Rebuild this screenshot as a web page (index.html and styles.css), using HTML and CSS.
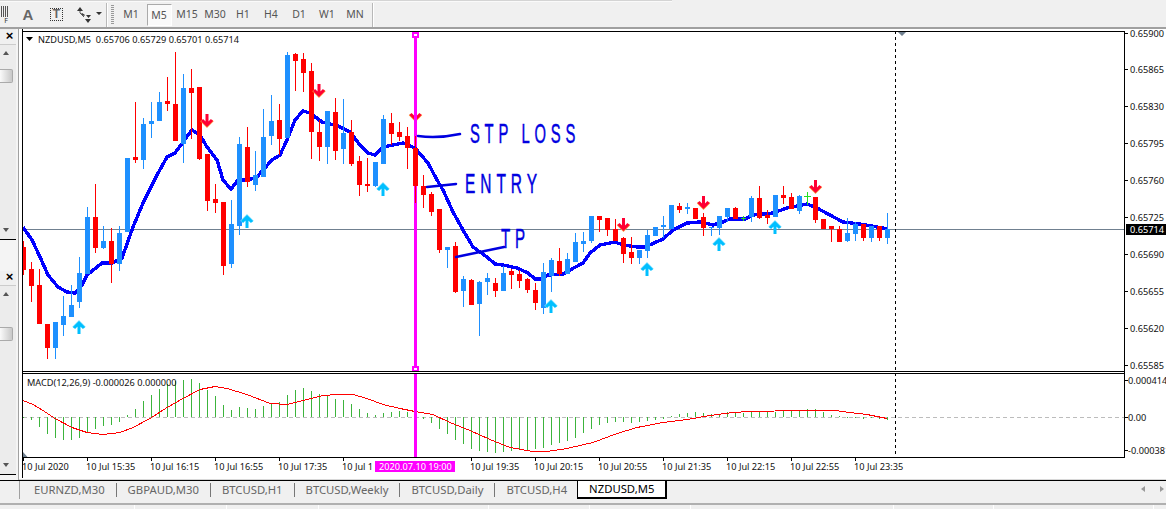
FILE: index.html
```html
<!DOCTYPE html>
<html lang="en">
<head>
<meta charset="utf-8">
<title>NZDUSD,M5</title>
<link rel="stylesheet" href="styles.css">
</head>
<body>
<header class="toolbar">
  <div class="topline"></div>
  <div class="tools">
    <div class="tool-f"><span class="tool-f-grid"></span><span class="tool-f-letter">F</span></div>
    <span class="tool-a">A</span>
    <span class="tool-t">T</span>
    <svg class="tool-arrows" width="27" height="16" viewBox="0 0 27 16">
      <path class="ico-fill" d="M1 4 4 0 7 4ZM9 12h6l-3 4ZM6 6l3 2-1 1-3-2ZM10 8h5l-2.500 3h0ZM20 5h6l-3 3Z"/>
      <path class="ico-line" d="M4 4v2l4 4"/>
    </svg>
    <span class="sep sep-a"></span>
    <span class="grip"></span>
    <nav class="periods">
      <span class="period">M1</span>
      <span class="period active">M5</span>
      <span class="period">M15</span>
      <span class="period">M30</span>
      <span class="period">H1</span>
      <span class="period">H4</span>
      <span class="period">D1</span>
      <span class="period">W1</span>
      <span class="period">MN</span>
    </nav>
    <span class="sep"></span>
  </div>
</header>

<main class="workspace">
  <aside class="side">
    <section class="side-panel first">
      <div class="side-head"><span class="close">×</span></div>
      <div class="scroll">
        <span class="tri-up"></span>
        <span class="thumb"></span>
        <span class="tri-down"></span>
      </div>
    </section>
    <section class="side-panel second">
      <div class="side-head"><span class="close">×</span></div>
      <div class="scroll">
        <span class="tri-up"></span>
        <span class="thumb"></span>
        <span class="tri-down"></span>
      </div>
    </section>
  </aside>

  <div class="chart-wrap">
    <svg class="chart" width="1147" height="449" viewBox="19 29 1147 449">
      <defs>
        <g id="dn">
          <path class="a-edge" d="M-6 6.500 0 12.500 6 6.500"/>
          <path class="a-red" d="M0 0V10M-5 6 0 11 5 6"/>
        </g>
        <g id="up">
          <path class="a-cyan-l" d="M-6 6.500 0 .5 6 6.500"/>
          <path class="a-cyan" d="M0 13V2M-5 7 0 2 5 7"/>
        </g>
        <clipPath id="main-clip"><rect x="23" y="32" width="1101" height="339"/></clipPath>
      </defs>

      <path class="cross" d="M23 229.500H1125"/>
      <g clip-path="url(#main-clip)">
        <use href="#dn" x="415.500" y="108"/>
        <rect class="vline" x="414" y="31" width="3" height="340"/>
        <path class="ma" d="M23 227 32 240 40 257 48 275 58 287 67 292 75 293 82 285 87 275 102 263 112 263 122 258 133 227 143 203 157 175 167 157 175 153 183 142 192 130 200 135 207 147 217 160 223 180 231 189 238 180 248 180 257 177 263 170 272 160 280 155 287 140 295 120 303 111 310 113 322 122 338 126 350 132 360 145 368 153 375 155 382 148 388 146 403 143 415 148 428 163 437 180 443 190 453 212 463 230 473 247 487 257 495 264 503 265 517 268 528 273 535 279 540 279 548 275 563 274 570 270 583 263 590 253 600 245 615 242 623 245 637 247 645 247 663 239 673 230 687 223 700 222 713 225 723 222 730 219 745 219 753 215 773 213 787 208 807 204 817 208 830 215 843 222 860 224 877 227 888 229"/>
        <path class="wick red" d="M23.500 241V275M31.500 262V302M39.500 269V324M47.500 348V359M95.500 184V253M111.500 228V283M135.500 102V163M167.500 77V111M175.500 52V141M191.500 69V139M199.500 87V160M207.500 154V211M215.500 184V213M223.500 202V275M247.500 127V187M279.500 104V155M295.500 53V91M303.500 53V92M311.500 63V159M319.500 120V161M335.500 98V160M351.500 120V166M359.500 156V196M367.500 158V192M391.500 113V145M399.500 122V141M407.500 127V169M415.500 136V203M423.500 175V208M431.500 192V216M439.500 209V253M455.500 242V293M471.500 279V305M495.500 278V297M511.500 269V289M519.500 270V288M527.500 278V293M535.500 283V310M559.500 248V276M599.500 216V232M607.500 218V236M615.500 219V241M623.500 237V263M631.500 237V264M679.500 203V213M695.500 208V219M703.500 213V236M735.500 207V219M759.500 186V219M767.500 210V224M783.500 186V204M791.500 193V209M815.500 197V223M823.500 219V229M831.500 226V242M839.500 226V242M863.500 224V241M879.500 226V241"/>
        <path class="body red" d="M23.500 247V270M31.500 269V286M39.500 285V324M47.500 324V348M95.500 217V248M111.500 241V264M135.500 157V160M167.500 101V104M175.500 104V141M191.500 88V93M199.500 87V159M207.500 154V201M215.500 199V203M223.500 202V266M247.500 147V182M279.500 120V139M295.500 54V61M303.500 59V73M311.500 71V132M319.500 132V147M335.500 112V151M351.500 132V164M359.500 161V185M367.500 184V186M391.500 123V134M399.500 132V137M407.500 136V148M415.500 148V186M423.500 186V195M431.500 194V212M439.500 209V250M455.500 246V292M471.500 280V305M495.500 283V291M511.500 271V275M519.500 274V281M527.500 279V290M535.500 290V303M559.500 261V274M599.500 216V220M607.500 218V230M615.500 229V241M623.500 238V254M631.500 252V258M679.500 206V210M695.500 208V219M703.500 217V228M735.500 208V219M759.500 198V218M767.500 215V218M783.500 195V198M791.500 197V209M815.500 197V220M823.500 219V229M831.500 226V229M839.500 229V242M863.500 224V238M879.500 226V238"/>
        <path class="wick blue" d="M55.500 322V359M63.500 296V336M71.500 285V317M79.500 257V308M87.500 207V274M103.500 226V249M119.500 226V271M127.500 158V232M143.500 118V169M151.500 102V138M159.500 92V121M183.500 74V163M231.500 200V268M239.500 137V235M255.500 151V191M263.500 109V177M271.500 95V145M287.500 52V138M327.500 111V164M343.500 99V164M375.500 162V187M383.500 115V164M447.500 247V268M463.500 276V307M479.500 281V336M487.500 273V295M503.500 266V291M543.500 263V314M551.500 258V292M567.500 253V274M575.500 233V262M583.500 232V252M591.500 216V243M639.500 250V264M647.500 230V258M655.500 227V236M663.500 216V238M671.500 205V229M687.500 203V214M711.500 227V236M719.500 216V235M727.500 208V222M751.500 196V222M775.500 195V217M799.500 195V214M847.500 218V242M855.500 222V241M871.500 226V242M887.500 213V244"/>
        <path class="body blue" d="M55.500 322V348M63.500 316V325M71.500 305V317M79.500 273V302M87.500 217V274M103.500 241V248M119.500 233V264M127.500 158V232M143.500 124V160M151.500 121V124M159.500 102V121M183.500 88V144M231.500 224V264M239.500 144V226M255.500 175V185M263.500 137V177M271.500 121V136M287.500 55V138M327.500 111V147M343.500 133V149M375.500 162V186M383.500 119V164M447.500 247V250M463.500 279V291M479.500 282V304M487.500 278V282M503.500 273V291M543.500 272V308M551.500 260V276M567.500 259V274M575.500 242V262M583.500 241V244M591.500 216V241M639.500 250V258M647.500 235V251M655.500 227V236M663.500 225V227M671.500 205V229M687.500 207V209M711.500 227V228M719.500 216V228M727.500 208V217M751.500 198V217M775.500 195V217M799.500 196V211M847.500 233V241M855.500 224V234M871.500 226V238M887.500 229V238"/>
        <path class="doji" d="M743.500 216V221M741 218.500H746M807.500 192V205M804 196.500H811"/>
        <use href="#dn" x="207" y="114"/>
        <use href="#dn" x="319" y="84"/>
        <use href="#dn" x="623.500" y="218"/>
        <use href="#dn" x="703.500" y="196"/>
        <use href="#dn" x="815.500" y="180"/>
        <use href="#up" x="79" y="321"/>
        <use href="#up" x="247" y="215"/>
        <use href="#up" x="383" y="183"/>
        <use href="#up" x="551" y="300"/>
        <use href="#up" x="647" y="263"/>
        <use href="#up" x="719" y="238"/>
        <use href="#up" x="775" y="221"/>
      </g>
      <rect class="handle" x="412.500" y="32.500" width="5" height="4"/>
      <rect class="handle" x="412.500" y="366.500" width="5" height="4"/>

      <path class="note-line" d="M418 136C432 138 446 137 460 134M427 187 456 184M456 257 504 247"/>
      <text class="note" x="470" y="143" textLength="110" lengthAdjust="spacingAndGlyphs">STP LOSS</text>
      <text class="note" x="465" y="193" textLength="77" lengthAdjust="spacingAndGlyphs">ENTRY</text>
      <text class="note" x="501" y="248" textLength="29" lengthAdjust="spacingAndGlyphs">TP</text>

      <path class="zero" d="M23 417.500H1124"/>
      <path class="hist" d="M23.500 417V418M31.500 417V420M39.500 417V427M47.500 417V434M55.500 417V438M63.500 417V440M71.500 417V440M79.500 417V438M87.500 417V432M95.500 417V429M103.500 417V426M111.500 417V425M119.500 417V422M127.500 417V415M135.500 417V409M143.500 417V401M151.500 417V395M159.500 417V389M167.500 417V384M175.500 417V381M183.500 417V380M191.500 417V379M199.500 417V383M207.500 417V390M215.500 417V396M223.500 417V405M231.500 417V410M239.500 417V407M247.500 417V408M255.500 417V409M263.500 417V406M271.500 417V404M279.500 417V402M287.500 417V395M295.500 417V390M303.500 417V388M311.500 417V391M319.500 417V394M327.500 417V396M335.500 417V399M343.500 417V400M351.500 417V404M359.500 417V409M367.500 417V413M375.500 417V415M383.500 417V413M391.500 417V412M399.500 417V411M407.500 417V412M423.500 417V419M431.500 417V423M439.500 417V429M447.500 417V434M455.500 417V440M463.500 417V444M471.500 417V449M479.500 417V451M487.500 417V452M495.500 417V453M503.500 417V452M511.500 417V451M519.500 417V450M527.500 417V450M535.500 417V449M543.500 417V448M551.500 417V445M559.500 417V443M567.500 417V441M575.500 417V438M583.500 417V433M591.500 417V429M599.500 417V425M607.500 417V423M615.500 417V422M623.500 417V422M631.500 417V423M639.500 417V422M647.500 417V421M655.500 417V420M663.500 417V419M671.500 417V416M679.500 417V414M687.500 417V413M695.500 417V412M703.500 417V413M711.500 417V414M719.500 417V414M727.500 417V412M735.500 417V413M743.500 417V413M751.500 417V412M759.500 417V412M767.500 417V412M775.500 417V412M783.500 417V410M791.500 417V410M799.500 417V410M807.500 417V409M815.500 417V409M823.500 417V412M831.500 417V415M839.500 417V416M847.500 417V418M855.500 417V418M863.500 417V419M871.500 417V418M879.500 417V419M887.500 417V420"/>
      <path class="signal" d="M23 400.500 33 404.500 43 410.500 55 418.500 72 427.500 87 432.500 103 434.500 120 432.500 133 427.500 150 418.500 167 407.500 183 398.500 200 389.500 215 386.500 227 388.500 247 394.500 270 403.500 287 404.500 303 400.500 323 395.500 337 394.500 353 394.500 367 398.500 383 404.500 400 408.500 415 411.500 433 414.500 450 422.500 470 430.500 490 439.500 510 447.500 533 451.500 547 451.500 567 448.500 593 442.500 617 433.500 637 427.500 663 422.500 687 419.500 710 415.500 733 412.500 750 411.500 800 410.500 835 410.500 850 412.500 867 414.500 887 418.500"/>
      <rect class="vline" x="414" y="374" width="3" height="83"/>

      <path class="dash" d="M895.500 31V457"/>
      <path class="corner" d="M897 31H907L902 36ZM23 452 27.500 457H23Z"/>
      <path class="frame" d="M22.500 29V478M22.500 31.500H1124.500V371.500H22.500M22.500 373.500H1124.500V457.500H22.500M1124.500 31V458"/>
      <path class="frame" d="M1125 33.500h3M1125 69.500h3M1125 106.500h3M1125 143.500h3M1125 180.500h3M1125 217.500h3M1125 254.500h3M1125 291.500h3M1125 328.500h3M1125 365.500h3M1125 380.500h3M1125 417.500h3M1125 450.500h3M23.500 458v3M87.500 458v3M151.500 458v3M215.500 458v3M279.500 458v3M343.500 458v3M471.500 458v3M535.500 458v3M599.500 458v3M663.500 458v3M727.500 458v3M791.500 458v3M855.500 458v3"/>
      <path class="legend-tri" d="M26 37H33L29.500 41Z"/>

      <text class="lbl" x="38" y="43">NZDUSD,M5  0.65706 0.65729 0.65701 0.65714</text>
      <text class="lbl" x="27" y="386">MACD(12,26,9) -0.000026 0.000000</text>

      <text class="lbl" x="1130" y="37">0.65900</text>
      <text class="lbl" x="1130" y="73">0.65865</text>
      <text class="lbl" x="1130" y="110">0.65830</text>
      <text class="lbl" x="1130" y="147">0.65795</text>
      <text class="lbl" x="1130" y="184">0.65760</text>
      <text class="lbl" x="1130" y="221">0.65725</text>
      <text class="lbl" x="1130" y="258">0.65690</text>
      <text class="lbl" x="1130" y="295">0.65655</text>
      <text class="lbl" x="1130" y="332">0.65620</text>
      <text class="lbl" x="1130" y="369">0.65585</text>
      <rect class="price-box" x="1126" y="224" width="40" height="11"/>
      <text class="lbl light" x="1130" y="233">0.65714</text>
      <text class="lbl" x="1128" y="384">0.000414</text>
      <text class="lbl" x="1128" y="421">0.00</text>
      <text class="lbl" x="1128" y="454">-0.000381</text>

      <text class="lbl" x="22" y="470">10 Jul 2020</text>
      <text class="lbl" x="86" y="470">10 Jul 15:35</text>
      <text class="lbl" x="150" y="470">10 Jul 16:15</text>
      <text class="lbl" x="214" y="470">10 Jul 16:55</text>
      <text class="lbl" x="278" y="470">10 Jul 17:35</text>
      <text class="lbl" x="342" y="470">10 Jul 1</text>
      <rect class="time-box" x="375" y="461" width="80" height="11"/>
      <text class="lbl light" x="379" y="470">2020.07.10 19:00</text>
      <text class="lbl" x="470" y="470">10 Jul 19:35</text>
      <text class="lbl" x="534" y="470">10 Jul 20:15</text>
      <text class="lbl" x="598" y="470">10 Jul 20:55</text>
      <text class="lbl" x="662" y="470">10 Jul 21:35</text>
      <text class="lbl" x="726" y="470">10 Jul 22:15</text>
      <text class="lbl" x="790" y="470">10 Jul 22:55</text>
      <text class="lbl" x="854" y="470">10 Jul 23:35</text>
    </svg>
  </div>
</main>

<div class="tabbar">
  <div class="tabs">
    <span class="tab">EURNZD,M30</span>
    <span class="tab">GBPAUD,M30</span>
    <span class="tab">BTCUSD,H1</span>
    <span class="tab">BTCUSD,Weekly</span>
    <span class="tab">BTCUSD,Daily</span>
    <span class="tab last">BTCUSD,H4</span>
    <span class="tab current">NZDUSD,M5</span>
  </div>
  <div class="tab-arrows"><span class="tab-left"></span><span class="tab-right"></span></div>
</div>

<footer class="status">
  <span class="cell w135"></span>
  <span class="cell w92"></span>
  <span class="cell w92"></span>
  <span class="cell w170"></span>
  <span class="cell w101"></span>
  <span class="cell w101"></span>
  <span class="cell w203"></span>
  <span class="cell w100"></span>
  <span class="cell w160"></span>
</footer>
</body>
</html>
```

FILE: styles.css
```css
* { box-sizing: border-box; }
html, body { margin: 0; padding: 0; }
body {
  width: 1166px;
  height: 509px;
  overflow: hidden;
  display: flex;
  flex-direction: column;
  background: #f0f0f0;
  font-family: "Noto Sans", "Liberation Sans", sans-serif;
}

/* toolbar */
.toolbar {
  height: 29px;
  flex: none;
  display: flex;
  flex-direction: column;
  background: #f0f0f0;
  border-bottom: 2px solid #a0a0a0;
}
.topline { height: 2px; width: 672px; flex: none; background: #d4d4d4; border-bottom: 1px solid #fafafa; }
.tools { flex: 1; display: flex; align-items: center; min-height: 0; }
.tool-f { width: 20px; height: 20px; flex: none; display: flex; flex-direction: column; align-items: flex-end; padding-right: 12px; }
.tool-f-grid { width: 7px; height: 11px; margin-top: 1px; flex: none; background: repeating-linear-gradient(90deg, #555 0 1px, transparent 1px 2px); }
.tool-f-letter { font-size: 7px; line-height: 7px; color: #333; }
.tool-a { width: 12px; margin-left: 2px; font: bold 15px/20px "Liberation Sans", sans-serif; color: #666; text-align: center; }
.tool-t { width: 13px; height: 13px; margin-left: 16px; border: 1px dotted #333; font: bold 12px/11px "Liberation Sans", sans-serif; color: #666; text-align: center; }
.tool-arrows { margin-left: 13px; flex: none; }
.ico-fill { fill: #333; }
.ico-line { fill: none; stroke: #555; stroke-width: 1; }
.sep { width: 2px; height: 24px; margin-left: 3px; flex: none; background: #b8b8b8; border-right: 1px solid #fff; }
.sep-a { margin-left: 3px; }
.grip { width: 3px; height: 19px; margin-left: 3px; flex: none; background: repeating-linear-gradient(180deg, #999 0 1px, transparent 1px 2px); }
.periods { display: flex; align-items: center; margin-left: 3px; }
.period { width: 28px; height: 22px; font-size: 10.500px; line-height: 21px; text-align: center; color: #555; }
.period.active { width: 25px; margin: 0 1.500px; border: 1px solid #aaa; border-right-color: #fff; border-bottom-color: #fff; background: #fafafa; }

/* workspace */
.workspace { flex: none; display: flex; height: 451px; }
.side { width: 19px; flex: none; border-right: 1px solid #a0a0a0; background: #f4f4f4; display: flex; flex-direction: column; }
.side-panel { width: 16px; display: flex; flex-direction: column; background: #ececec; }
.side-panel.first { height: 210px; padding-top: 1px; }
.side-panel.second { height: 236px; padding-top: 31px; border-top: 1px solid #000; border-bottom: 1px solid #000; background: linear-gradient(#f4f4f4 31px, #ececec 31px); }
.side-head { height: 14px; display: flex; justify-content: flex-end; flex: none; background: #f0f0f0; }
.close { width: 13px; font: bold 13px/12px "Liberation Sans", sans-serif; color: #000; text-align: center; }
.scroll { flex: 1; display: flex; flex-direction: column; border-top: 1px solid #ccc; }
.tri-up { margin: 6px 0 0 3px; width: 0; height: 0; flex: none; border: 3px solid transparent; border-top: 0; border-bottom: 4px solid #555; }
.thumb { margin-top: 14px; width: 13px; height: 14px; flex: none; background: linear-gradient(90deg, #fafafa, #c8c8c8); border: 1px solid #aaa; border-left: 0; border-radius: 0 2px 2px 0; }
.side-panel.second .thumb { margin-top: 31px; }
.tri-down { margin: auto 0 7px 3px; width: 0; height: 0; flex: none; border: 3px solid transparent; border-bottom: 0; border-top: 4px solid #555; }

.chart-wrap { flex: 1; background: #fff; min-width: 0; border-bottom: 1px solid #d8d8d8; }
.chart { display: block; }

/* chart drawing */
.lbl { font: 9.200px "Noto Sans", sans-serif; fill: #111; white-space: pre; }
.lbl.light { fill: #fff; }
.price-box { fill: #000; }
.time-box { fill: #ff00ff; }
.cross { stroke: #708090; stroke-width: 1; fill: none; shape-rendering: crispEdges; }
.vline { fill: #ff00ff; }
.handle { fill: #fff; stroke: #ff00ff; stroke-width: 2; shape-rendering: crispEdges; }
.ma { fill: none; stroke: #0000ff; stroke-width: 3.400; shape-rendering: crispEdges; stroke-linejoin: round; }
.wick { fill: none; stroke-width: 1; shape-rendering: crispEdges; }
.body { fill: none; stroke-width: 5; shape-rendering: crispEdges; }
.red { stroke: #ff0000; }
.blue { stroke: #1e90ff; }
.doji { fill: none; stroke: #22e022; stroke-width: 1; shape-rendering: crispEdges; }
.a-red { fill: none; stroke: #ff0033; stroke-width: 3; }
.a-edge { fill: none; stroke: #ff9a3c; stroke-width: 2; }
.a-cyan { fill: none; stroke: #00bfff; stroke-width: 3; }
.a-cyan-l { fill: none; stroke: #7fe0ff; stroke-width: 2; }
.note-line { fill: none; stroke: #0000e0; stroke-width: 2.500; stroke-linecap: round; }
.note { font: 28px "Liberation Sans", sans-serif; letter-spacing: 9px; fill: #0000e0; stroke: #0000e0; stroke-width: .5px; }
.zero { fill: none; stroke: #bcbcbc; stroke-width: 1; stroke-dasharray: 4 3; shape-rendering: crispEdges; }
.hist { fill: none; stroke: #3cb43c; stroke-width: 1; shape-rendering: crispEdges; }
.signal { fill: none; stroke: #ff0000; stroke-width: 1; shape-rendering: crispEdges; }
.dash { fill: none; stroke: #000; stroke-width: 1; stroke-dasharray: 3 3; shape-rendering: crispEdges; }
.corner { fill: #708090; }
.frame { fill: none; stroke: #000; stroke-width: 1; shape-rendering: crispEdges; }
.legend-tri { fill: #000; }

/* tab bar */
.tabbar {
  height: 25px;
  flex: none;
  display: flex;
  justify-content: space-between;
  align-items: flex-start;
  padding-left: 19px;
  background: #f0f0f0;
  border-top: 1px solid #000;
  border-bottom: 2px solid #b0b0b0;
}
.tabs { display: flex; align-items: flex-start; height: 18px; border-left: 1px solid #a0a0a0; }
.tab { height: 14px; margin-top: 2px; padding: 0 11px; border-right: 1px solid #777; font-size: 11.300px; line-height: 14px; color: #666; white-space: nowrap; }
.tab:first-child { padding-left: 14px; }
.tab.last { border-right: 0; }
.tab.current {
  height: 18px;
  margin: 0 0 0 -1px;
  padding: 1px 11px 0;
  background: #fff;
  border: 1px solid #000;
  border-top: 0;
  border-right-width: 2px;
  border-bottom-width: 2px;
  color: #000;
}
.tab-arrows { display: flex; gap: 15px; padding: 5px 2px 0 0; }
.tab-left { width: 0; height: 0; border: 3.500px solid transparent; border-left: 0; border-right: 4px solid #999; }
.tab-right { width: 0; height: 0; border: 3.500px solid transparent; border-right: 0; border-left: 4px solid #999; }

/* status bar */
.status { flex: none; height: 4px; display: flex; background: #f0f0f0; }
.cell { flex: none; border-right: 1px solid #fff; }
.w135 { width: 135px; }
.w92 { width: 92px; }
.w170 { width: 170px; }
.w101 { width: 101px; }
.w203 { width: 203px; }
.w100 { width: 100px; }
.w160 { width: 160px; }
```
